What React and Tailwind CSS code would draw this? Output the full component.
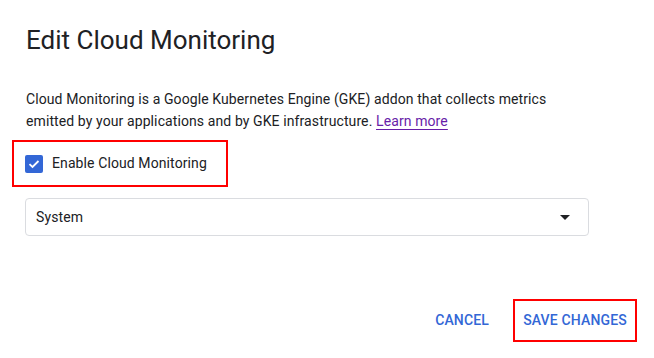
export default function App() {
  return (
    <div className="w-[654px] h-[358px] bg-white overflow-hidden pt-[24px] pl-[26px] pr-[17px]" style={{ fontFamily: "Roboto, 'Liberation Sans', sans-serif" }}>
      <h1 className="text-[26px] leading-[32px] text-[#202124] font-normal">Edit Cloud Monitoring</h1>
      <p className="mt-[32px] text-[14px] leading-[22px] tracking-[0.1px] text-[#202124] w-[560px]">
        Cloud Monitoring is a Google Kubernetes Engine (GKE) addon that collects metrics emitted by your applications and by GKE infrastructure.{" "}
        <a className="text-[#681da8] underline underline-offset-[3px]" href="#">Learn more</a>
      </p>
      <div className="mt-[8px] -ml-[14px] w-[216px] h-[47px] border-2 border-[#ff0000] flex items-center pl-[11px] gap-[9px]">
        <div className="w-[18px] h-[18px] rounded-[2px] bg-[#3367d6] flex items-center justify-center">
          <svg width="14" height="14" viewBox="0 0 14 14">
            <path d="M2.5 7.2 L5.5 10 L11.5 4" fill="none" stroke="white" strokeWidth="1.8" />
          </svg>
        </div>
        <span className="text-[14px] tracking-[0.1px] text-[#202124]">Enable Cloud Monitoring</span>
      </div>
      <div className="mt-[11px] -ml-[1px] w-[564px] h-[38px] border border-[#dadce0] rounded-[4px] flex items-center justify-between pl-[10px] pr-[18px]">
        <span className="text-[14px] tracking-[0.1px] text-[#202124]">System</span>
        <svg width="10" height="5" viewBox="0 0 10 5">
          <path d="M0 0 L10 0 L5 5 Z" fill="#202124" />
        </svg>
      </div>
      <div className="mt-[63px] flex justify-end items-center gap-[24px]">
        <button className="text-[14px] font-medium tracking-[0.15px] text-[#3367d6] uppercase">Cancel</button>
        <button className="w-[124px] h-[43px] border-2 border-[#ff0000] text-[14px] font-medium tracking-[0.15px] text-[#3367d6] uppercase flex items-center justify-center">Save changes</button>
      </div>
    </div>
  );
}
